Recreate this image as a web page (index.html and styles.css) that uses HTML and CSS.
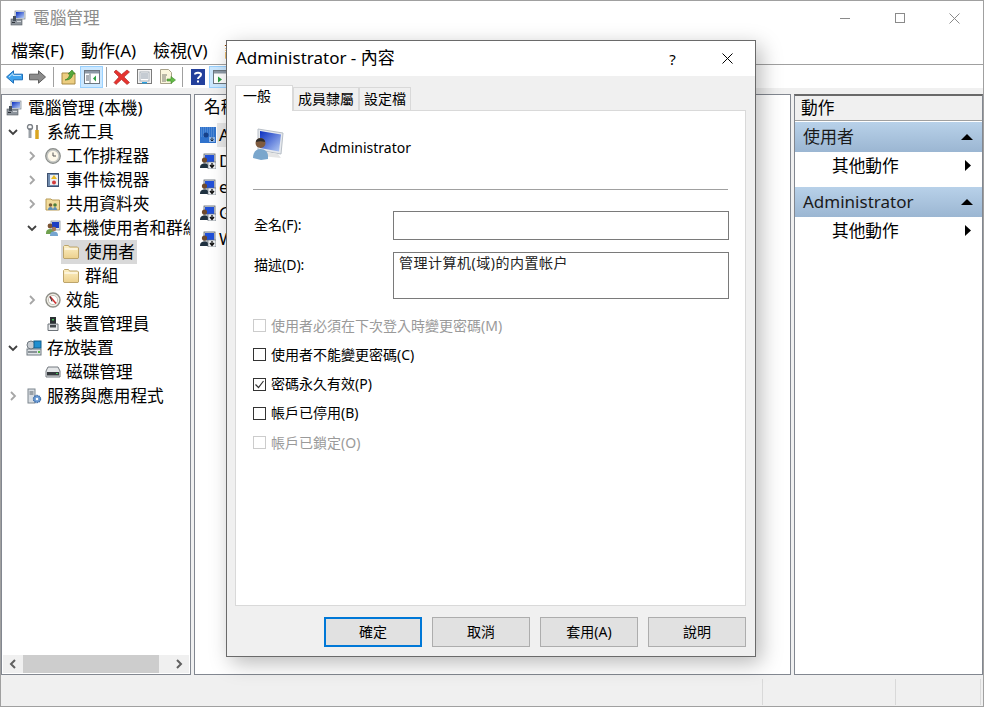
FILE: index.html
```html
<!DOCTYPE html>
<html lang="zh-Hant">
<head>
<meta charset="utf-8">
<title>電腦管理</title>
<link rel="stylesheet" href="styles.css">
</head>
<body>
<svg class="defs" width="0" height="0">
  <defs>
    <linearGradient id="blue" x1="0" y1="0" x2="1" y2="1"><stop offset="0" stop-color="#0a2fc0"/><stop offset="1" stop-color="#b5ccf5"/></linearGradient>
    <linearGradient id="fold" x1="0" y1="0" x2="0" y2="1"><stop offset="0" stop-color="#fdf0c4"/><stop offset="1" stop-color="#ecd08c"/></linearGradient>
    <symbol id="computer" viewBox="0 0 16 16">
      <rect x="1" y="9" width="11" height="6" fill="#8d949c" stroke="#555b62" stroke-width=".6"/>
      <rect x="2" y="12" width="3" height="1" fill="#2c3138"/><rect x="7" y="11" width="4" height="1" fill="#d5d9dd"/>
      <rect x="5" y="1" width="10" height="8" fill="#e4e8ee" stroke="#7a838c" stroke-width=".7"/>
      <rect x="6" y="2" width="8" height="6" fill="url(#blue)"/>
      <rect x="3" y="6" width="3" height="5" fill="#47505a"/>
    </symbol>
    <symbol id="users" viewBox="0 0 16 16">
      <rect x="6" y="1" width="9" height="9" fill="#e3e7ec" stroke="#7a838c" stroke-width=".7"/>
      <rect x="7" y="2" width="7" height="6" fill="#1c3fc4"/>
      <circle cx="5" cy="6" r="2.4" fill="#7c5433"/><path d="M1 13c0-3 2-4 4-4s4 1 4 4v1H1z" fill="#6fa04e"/>
      <circle cx="9" cy="9" r="2.2" fill="#a87a55"/><path d="M5 15c0-2.500 2-3.500 4-3.500s4 1 4 3.500v1H5z" fill="#76a5d0"/>
    </symbol>
    <symbol id="account" viewBox="0 0 16 16">
      <rect x="4" y="1" width="11" height="9" fill="#dfe4ea" stroke="#57606a" stroke-width=".8"/>
      <rect x="5" y="2" width="9" height="7" fill="#2150d8"/>
      <circle cx="4.500" cy="7" r="2.600" fill="#6e4a2c"/><path d="M0 15c0-3.500 2-4.500 4.500-4.500S9 11.500 9 15z" fill="#1f3140"/>
      <rect x="8" y="9" width="8" height="7" fill="#eceff2" stroke="#5d6670" stroke-width=".6"/>
      <path d="M12 10v3.500M10 12l2 2.500 2-2.500" fill="none" stroke="#111" stroke-width="1.300"/>
    </symbol>
    <symbol id="accountx" viewBox="0 0 16 16">
      <rect x="0" y="0" width="16" height="16" fill="#2f72cc"/>
      <path d="M1 1h14M1 3h14M1 5h14M1 7h14M1 9h14" stroke="#6f9fdc" stroke-dasharray="1 1"/>
      <circle cx="6" cy="8" r="2.500" fill="#16418a"/>
      <rect x="9" y="10" width="6" height="5" fill="#8fb4e6"/>
      <path d="M12 10.500v3M10.500 12.500l1.500 1.500 1.500-1.500" fill="none" stroke="#123" stroke-width="1"/>
    </symbol>
    <symbol id="folder" viewBox="0 0 16 14">
      <path d="M.5 3V1.500L1.500.5h4l1 1.500h8l1 1v10l-.5.500H1L.5 13z" fill="url(#fold)" stroke="#bda56c"/>
      <path d="M1.500 4h13" stroke="#fff" stroke-width="1"/>
    </symbol>
    <symbol id="chev-r" viewBox="0 0 12 12"><path d="M4 2l4 4-4 4" fill="none" stroke="#a6a6a6" stroke-width="1.800"/></symbol>
    <symbol id="chev-d" viewBox="0 0 12 12"><path d="M2 4l4 4 4-4" fill="none" stroke="#404040" stroke-width="1.800"/></symbol>
  </defs>
</svg>

<div class="window">
  <header class="titlebar">
    <svg class="ico16"><use href="#computer"/></svg>
    <span class="apptitle">電腦管理</span>
    <div class="winbtns">
      <span class="winbtn"><svg width="10" height="10" viewBox="0 0 10 10"><path d="M0 5.500h10" stroke="#8a8a8a"/></svg></span>
      <span class="winbtn"><svg width="10" height="10" viewBox="0 0 10 10"><rect x=".5" y=".5" width="9" height="9" fill="none" stroke="#8a8a8a"/></svg></span>
      <span class="winbtn"><svg width="11" height="11" viewBox="0 0 11 11"><path d="M.5.500l10 10M10.500.500l-10 10" stroke="#8a8a8a"/></svg></span>
    </div>
  </header>
  <nav class="menubar">
    <span>檔案(F)</span><span>動作(A)</span><span>檢視(V)</span><span>說明(H)</span>
  </nav>
  <div class="toolbar">
    <span class="tool tool-first"><svg width="17" height="14" viewBox="0 0 17 14"><path d="M.5 7L7.500.8v3.400h9v5.600h-9v3.400z" fill="#3fa3ee" stroke="#1f6fb8"/><path d="M3 7l4-3.500v2h8" fill="none" stroke="#bfe3fb"/></svg></span>
    <span class="tool"><svg width="17" height="14" viewBox="0 0 17 14"><path d="M16.500 7L9.500.8v3.400h-9v5.600h9v3.400z" fill="#8c8c8c" stroke="#5e5e5e"/></svg></span>
    <i class="tsep"></i>
    <span class="tool"><svg width="16" height="16" viewBox="0 0 16 16"><path d="M1 4h13v11H1z" fill="#eccd80" stroke="#a98a45"/><path d="M4 11c3-1 4-3 5-6H7l4-4 3 4h-2c-1 4-3 6-8 6z" fill="#55a83c" stroke="#2f7a20" stroke-width=".6"/></svg></span>
    <span class="tool tool-on"><svg width="16" height="14" viewBox="0 0 16 14"><rect x=".5" y=".5" width="15" height="13" fill="#fff" stroke="#6d7780"/><rect x="1" y="1" width="14" height="2.500" fill="#8d99a6"/><path d="M6 3.500V13" stroke="#6d7780"/><path d="M2 6h3M2 8h3M2 10h3" stroke="#5a6570"/><path d="M12 5.500v6L9 8.500z" fill="#2ea043"/></svg></span>
    <i class="tsep"></i>
    <span class="tool"><svg width="17" height="16" viewBox="0 0 17 16"><path d="M1 3l2-2 5.500 4.500L14 1l2.500 2L11 8l5.500 5.500L14 15.500 8.500 10.500 3 15.500l-2-2L6 8z" fill="#e6332f" stroke="#a82320" stroke-width=".6"/></svg></span>
    <span class="tool"><svg width="15" height="15" viewBox="0 0 15 15"><rect x=".5" y=".5" width="14" height="14" fill="#f3f3f3" stroke="#7b7b7b"/><rect x="3" y="3" width="9" height="9" fill="#fff" stroke="#a8b0b8"/><path d="M4 5h7M4 7h7M4 9h7" stroke="#8b98a6"/><rect x="5" y="13" width="5" height="1.500" fill="#2aa0e0"/></svg></span>
    <span class="tool"><svg width="17" height="16" viewBox="0 0 17 16"><path d="M1.500.5h8l3 3v11h-11z" fill="#fbf6dc" stroke="#a8a28a"/><path d="M3 6h5M3 8h4M3 10h4M3 12h4" stroke="#7a7a70"/><path d="M8 10h4V7.500l4.500 3.500-4.500 3.500V12H8z" fill="#63b946" stroke="#3c8a28" stroke-width=".6"/></svg></span>
    <i class="tsep"></i>
    <span class="tool"><svg width="14" height="16" viewBox="0 0 14 16"><rect width="14" height="16" fill="#23409c"/><path d="M4 5.500C4 3 10 3 10 5.500 10 8 7 7.500 7 10" fill="none" stroke="#fff" stroke-width="2"/><rect x="6" y="11.500" width="2" height="2" fill="#fff"/></svg></span>
    <span class="tool tool-on"><svg width="16" height="14" viewBox="0 0 16 14"><rect x=".5" y=".5" width="15" height="13" fill="#fff" stroke="#6d7780"/><rect x="1" y="1" width="14" height="2.500" fill="#8d99a6"/><path d="M5 6.500l4 3-4 3z" fill="#2ea043"/></svg></span>
  </div>

  <main class="panes">
    <section class="pane tree">
      <div class="treelist">
        <div class="row root"><svg class="ico16"><use href="#computer"/></svg><span>電腦管理 (本機)</span></div>
        <div class="row l1"><svg class="chev"><use href="#chev-d"/></svg><svg class="ico16" viewBox="0 0 16 16"><path d="M4 4v10" stroke="#9aa0a6" stroke-width="3"/><path d="M11 1v5" stroke="#8d8d8d" stroke-width="2"/><path d="M11 6v9" stroke="#d9a520" stroke-width="3.500"/><circle cx="4" cy="3" r="2.500" fill="none" stroke="#7b8086" stroke-width="1.400"/></svg><span>系統工具</span></div>
        <div class="row l2"><svg class="chev"><use href="#chev-r"/></svg><svg class="ico16" viewBox="0 0 16 16"><circle cx="8" cy="8" r="7.300" fill="#c5c7c4" stroke="#8a8d8a" stroke-width="1.200"/><circle cx="8" cy="8" r="5.200" fill="#fdf8ea"/><path d="M8 4.500V8h3" fill="none" stroke="#555"/></svg><span>工作排程器</span></div>
        <div class="row l2"><svg class="chev"><use href="#chev-r"/></svg><svg class="ico16" viewBox="0 0 16 16"><rect x="2.500" y="1.500" width="11" height="13" fill="#6f8bad" stroke="#3f5270"/><rect x="5" y="3" width="8" height="10" fill="#eef0f3"/><path d="M9 3l3 4H6z" fill="#e8b820"/><circle cx="9" cy="10.500" r="2" fill="#d33b3b"/></svg><span>事件檢視器</span></div>
        <div class="row l2"><svg class="chev"><use href="#chev-r"/></svg><svg class="ico16" viewBox="0 0 16 16"><path d="M1 3h5l1 1h7.500v10H1z" fill="#f2dc9c" stroke="#b79a55"/><circle cx="5.500" cy="9" r="1.800" fill="#7a5a34"/><circle cx="10" cy="9" r="1.800" fill="#4f7f3c"/><path d="M3 14c0-2 1-3 2.500-3S8 12 8 14zM8 14c0-2 1-3 2-3s2 1 2 3z" fill="#5f8fb8"/></svg><span>共用資料夾</span></div>
        <div class="row l2"><svg class="chev"><use href="#chev-d"/></svg><svg class="ico16"><use href="#users"/></svg><span>本機使用者和群組</span></div>
        <div class="row l3"><div class="node selected"><svg class="ico-folder"><use href="#folder"/></svg><span>使用者</span></div></div>
        <div class="row l3"><div class="node"><svg class="ico-folder"><use href="#folder"/></svg><span>群組</span></div></div>
        <div class="row l2"><svg class="chev"><use href="#chev-r"/></svg><svg class="ico16" viewBox="0 0 16 16"><circle cx="8" cy="8" r="7" fill="#f0eee6" stroke="#8f8f88" stroke-width="1.400"/><circle cx="8" cy="8" r="4.600" fill="#fff" stroke="#c5c2b8"/><path d="M5 4.500l6 7" stroke="#d02f2f" stroke-width="1.600"/><path d="M5 4.500l2 5" stroke="#333" stroke-width="1"/></svg><span>效能</span></div>
        <div class="row l2"><span class="chev-gap"></span><svg class="ico16" viewBox="0 0 16 16"><rect x="5" y="1" width="6" height="8" fill="#2b2f33"/><rect x="7" y="3" width="2" height="1.500" fill="#46c05a"/><path d="M3 8h10v6.500H3z" fill="#e9ebed" stroke="#6c7278"/><rect x="5" y="9" width="6" height="2.500" fill="#43484d"/></svg><span>裝置管理員</span></div>
        <div class="row l1"><svg class="chev"><use href="#chev-d"/></svg><svg class="ico16" viewBox="0 0 16 16"><rect x="1" y="9" width="14" height="6" fill="#dfe3e6" stroke="#6f7880"/><rect x="2" y="11" width="9" height="2" fill="#8b9399"/><rect x="12" y="11" width="2" height="2" fill="#57b84a"/><circle cx="5" cy="5" r="4" fill="#c7ccd1" stroke="#6f7880"/><rect x="8" y="1" width="7" height="7" fill="#1f8fd0" stroke="#135c8a"/></svg><span>存放裝置</span></div>
        <div class="row l2"><span class="chev-gap"></span><svg class="ico16" viewBox="0 0 16 16"><path d="M3 3h10l2 4v6H1V7z" fill="#e4e6e8" stroke="#757a80"/><rect x="2" y="8" width="12" height="3.500" fill="#35393d"/><rect x="11" y="9" width="2" height="1" fill="#46c05a"/></svg><span>磁碟管理</span></div>
        <div class="row l1"><svg class="chev"><use href="#chev-r"/></svg><svg class="ico16" viewBox="0 0 16 16"><rect x="2" y="1" width="7" height="14" fill="#d8dde2" stroke="#7d868e"/><path d="M3.500 4h4M3.500 6h4" stroke="#5b646c"/><circle cx="11" cy="11" r="3.500" fill="#6d9dd6" stroke="#3f6ea8" stroke-dasharray="1.500 .7" stroke-width="1.400"/><circle cx="11" cy="11" r="1.200" fill="#fff"/></svg><span>服務與應用程式</span></div>
      </div>
      <div class="hscroll">
        <svg class="sbtn" width="8" height="10" viewBox="0 0 8 10"><path d="M6 1L2 5l4 4" fill="none" stroke="#606060" stroke-width="2"/></svg>
        <div class="strack"><div class="sthumb"></div></div>
        <svg class="sbtn" width="8" height="10" viewBox="0 0 8 10"><path d="M2 1l4 4-4 4" fill="none" stroke="#606060" stroke-width="2"/></svg>
      </div>
    </section>

    <section class="pane list">
      <div class="listhead">名稱</div>
      <div class="listrow"><svg class="ico16"><use href="#accountx"/></svg><span class="cell on">Administrator</span></div>
      <div class="listrow"><svg class="ico16"><use href="#account"/></svg><span class="cell">DefaultAccount</span></div>
      <div class="listrow"><svg class="ico16"><use href="#account"/></svg><span class="cell">e</span></div>
      <div class="listrow"><svg class="ico16"><use href="#account"/></svg><span class="cell">Guest</span></div>
      <div class="listrow"><svg class="ico16"><use href="#account"/></svg><span class="cell">WDAGUtilityAccount</span></div>
    </section>

    <section class="pane actions">
      <div class="acthead">動作</div>
      <div class="actgroup"><span>使用者</span><svg width="12" height="6" viewBox="0 0 12 6"><path d="M6 0l6 6H0z" fill="#000"/></svg></div>
      <div class="actitem"><span>其他動作</span><svg width="6" height="11" viewBox="0 0 6 11"><path d="M0 0l6 5.500L0 11z" fill="#000"/></svg></div>
      <div class="actgroup second"><span>Administrator</span><svg width="12" height="6" viewBox="0 0 12 6"><path d="M6 0l6 6H0z" fill="#000"/></svg></div>
      <div class="actitem"><span>其他動作</span><svg width="6" height="11" viewBox="0 0 6 11"><path d="M0 0l6 5.500L0 11z" fill="#000"/></svg></div>
    </section>
  </main>

  <footer class="statusbar">
    <span class="stat grow"></span><span class="stat mid"></span><span class="stat end"></span>
  </footer>
</div>

<div class="dialog">
  <div class="dtitle">
    <span class="dtitle-text">Administrator - 內容</span>
    <span class="dbtn">?</span>
    <span class="dbtn"><svg width="11" height="11" viewBox="0 0 11 11"><path d="M.5.500l10 10M10.500.500l-10 10" stroke="#000"/></svg></span>
  </div>
  <div class="dbody">
    <div class="tabs">
      <span class="tab active">一般</span><span class="tab">成員隸屬</span><span class="tab">設定檔</span>
    </div>
    <div class="tabpanel">
      <div class="identity">
        <svg class="bigicon" viewBox="0 0 32 32">
          <path d="M5 1l25 4-2 21-23-4z" fill="#e6e9ee" stroke="#b8bfc7"/>
          <path d="M7 3l21 3.500-2 17L7 20z" fill="url(#blue)"/>
          <path d="M8 28l20 2-3-4-12-2z" fill="#e5e5e5"/>
          <path d="M0 30c0-6 3-9 7.500-9s7.500 3 7.500 7v3l-7 1z" fill="#7aa6cc"/>
          <circle cx="7.500" cy="15" r="5" fill="#7f5b3f"/>
          <path d="M3 14c0-5 9-5 9 0-3-1-6-1-9 0z" fill="#2b2b2b"/>
        </svg>
        <span class="username">Administrator</span>
      </div>
      <hr class="divider">
      <div class="field name-field"><label>全名(F):</label><div class="input"></div></div>
      <div class="field"><label class="desc-label">描述(D):</label><div class="input textarea">管理计算机(域)的内置帐户</div></div>
      <div class="checks">
        <div class="check disabled"><i class="box"></i><span>使用者必須在下次登入時變更密碼(M)</span></div>
        <div class="check"><i class="box"></i><span>使用者不能變更密碼(C)</span></div>
        <div class="check"><i class="box"><svg width="11" height="11" viewBox="0 0 11 11"><path d="M1.500 5.500l3 3 5-6.500" fill="none" stroke="#333" stroke-width="1.200"/></svg></i><span>密碼永久有效(P)</span></div>
        <div class="check"><i class="box"></i><span>帳戶已停用(B)</span></div>
        <div class="check disabled"><i class="box"></i><span>帳戶已鎖定(O)</span></div>
      </div>
    </div>
    <div class="dfoot">
      <span class="btn default">確定</span><span class="btn">取消</span><span class="btn">套用(A)</span><span class="btn">說明</span>
    </div>
  </div>
</div>
</body>
</html>
```

FILE: styles.css
```css
* { box-sizing: border-box; }
html, body { margin: 0; padding: 0; }
body {
  width: 984px; height: 707px; overflow: hidden; position: relative;
  font-family: "Noto Sans", "Noto Sans CJK TC", sans-serif;
  font-size: 16.700px; line-height: 24px; color: #000; background: #fff;
}
.defs { position: absolute; }
svg { display: block; flex: none; }
.ico16 { width: 16px; height: 16px; }
.ico-folder { width: 16px; height: 14px; }

.window { width: 984px; height: 707px; display: flex; flex-direction: column; border: 1px solid #a0a0a0; background: #f0f0f0; }
.titlebar { height: 34px; background: #fff; display: flex; align-items: center; padding-left: 9px; flex: none; }
.apptitle { margin-left: 7px; color: #8c8c8c; flex: 1; }
.winbtns { display: flex; margin-right: 1px; }
.winbtn { width: 55px; height: 34px; display: flex; align-items: center; justify-content: center; }

.menubar { height: 29px; background: #fff; display: flex; gap: 17px; padding: 2px 0 0 10px; flex: none; align-items: center; font-size: 17px; }
.toolbar { height: 24px; background: #fff; border-top: 1px solid #a0a0a0; display: flex; align-items: center; flex: none; }
.tool { width: 23px; height: 22px; display: flex; align-items: center; justify-content: center; border: 1px solid transparent; }
.tool-first { margin-left: 2px; }
.tool-first + .tool { margin-right: 1px; }
.tool-on { background: #cce8ff; border-color: #99d1ff; }
.tsep { width: 1px; height: 20px; background: #a0a0a0; margin: 0 3px; }

.panes { flex: 1; display: flex; gap: 3px; padding: 6px 0 2px; min-height: 0; background: #f0f0f0; }
.pane { background: #fff; border: 1px solid #828790; min-height: 0; overflow: hidden; }
.tree { width: 190px; display: flex; flex-direction: column; padding-top: 1px; }
.treelist { flex: 1; min-height: 0; overflow: hidden; }
.row { height: 24px; display: flex; align-items: center; white-space: nowrap; }
.row.root { padding-left: 4px; gap: 6px; }
.l1 { padding-left: 5px; }
.l2 { padding-left: 24px; }
.l3 { padding-left: 59px; }
.chev, .chev-gap { width: 12px; height: 12px; margin-right: 7px; flex: none; }
.row > .ico16 { margin-right: 5px; }
.row.root > .ico16 { margin-right: 0; }
.node { display: flex; align-items: center; gap: 6px; height: 24px; padding: 0 2px; }
.selected { background: #d9d9d9; }

.hscroll { height: 18px; margin: 0 1px 1px; background: #f0f0f0; display: flex; align-items: center; flex: none; }
.sbtn { margin: 0 6px; }
.strack { flex: 1; height: 18px; }
.sthumb { width: 136px; height: 18px; background: #cdcdcd; }

.list { width: 597px; padding: 0 0 0 5px; }
.listhead { height: 24px; padding-left: 4px; }
.listrow { height: 26px; display: flex; align-items: center; gap: 1px; white-space: nowrap; }
.listhead + .listrow { margin-top: 3px; }
.cell { padding: 0 2px; }
.cell.on { background: #e8e8e8; }

.actions { width: 189px; border-top: 2px solid #696969; flex: none; }
.acthead { height: 25px; background: #f0f0f0; border-bottom: 1px solid #a0a0a0; padding-left: 6px; }
.actgroup { height: 30px; margin-top: 1px; background: linear-gradient(#b8d1e9, #9bb6d2); display: flex; align-items: center; justify-content: space-between; padding: 0 9px 0 8px; color: #1a1a1a; font-size: 17px; }
.actgroup.second { margin-top: 9px; }
.actitem { height: 26px; padding: 1px 11px 0 37px; display: flex; align-items: center; justify-content: space-between; }

.statusbar { height: 29px; display: flex; flex: none; padding: 2px 0 1px; background: #f0f0f0; }
.stat { display: block; border-right: 1px solid #d9d9d9; }
.grow { flex: 1; }
.mid { width: 133px; }
.end { width: 85px; margin-right: 2px; }

.dialog {
  position: absolute; left: 226px; top: 40px; width: 530px; height: 617px;
  border: 1px solid #6a6a6a; background: #f0f0f0; display: flex; flex-direction: column;
  box-shadow: 5px 6px 20px rgba(0,0,0,.28);
}
.dtitle { height: 35px; background: #fff; display: flex; align-items: center; padding-left: 9px; flex: none; font-size: 17px; }
.dtitle-text { flex: 1; padding-bottom: 2px; }
.dbtn { width: 55px; height: 35px; display: flex; align-items: center; justify-content: center; font-size: 15px; }
.dbody { flex: 1; display: flex; flex-direction: column; padding: 9px 9px 0 8px; min-height: 0; }
.tabs { display: flex; align-items: flex-end; height: 25px; font-size: 14px; line-height: 20px; }
.tab { height: 23px; padding: 1px 4px 0; background: #f0f0f0; border: 1px solid #d9d9d9; border-bottom: 0; white-space: nowrap; }
.tab.active { height: 26px; background: #fff; padding: 0 21px 0 7px; position: relative; top: 1px; z-index: 1; }
.tabpanel { height: 496px; background: #fff; border: 1px solid #d9d9d9; padding: 17px 16px 0 17px; font-size: 14px; line-height: 20px; }
.identity { display: flex; align-items: center; height: 32px; gap: 35px; margin-bottom: 29px; }
.bigicon { width: 32px; height: 32px; }
.username { font-size: 14px; padding-top: 8px; }
.divider { border: 0; height: 1px; background: #a0a0a0; margin: 0 1px 21px 0; }
.field { display: flex; align-items: flex-start; margin-bottom: 12px; }
.field label { width: 140px; padding-top: 4px; padding-left: 1px; }
.field .desc-label { padding-top: 3px; }
.input { flex: 1; height: 29px; border: 1px solid #7a7a7a; background: #fff; font-size: 14px; letter-spacing: .5px; padding: 0 5px; line-height: 20px; }
.textarea { height: 47px; color: #222; }
.checks { display: flex; flex-direction: column; margin-top: 12px; }
.check { display: flex; align-items: center; gap: 5px; height: 29.250px; }
.box { width: 13px; height: 13px; border: 1px solid #333; background: #fff; display: block; flex: none; }
.check.disabled { color: #9a9a9a; }
.check.disabled .box { border-color: #cccccc; }
.dfoot { display: flex; justify-content: flex-end; gap: 10px; padding-top: 11px; font-size: 14px; }
.btn { width: 98px; height: 30px; display: flex; align-items: center; justify-content: center; background: #e1e1e1; border: 1px solid #adadad; }
.btn.default { border: 2px solid #0078d7; }
```
